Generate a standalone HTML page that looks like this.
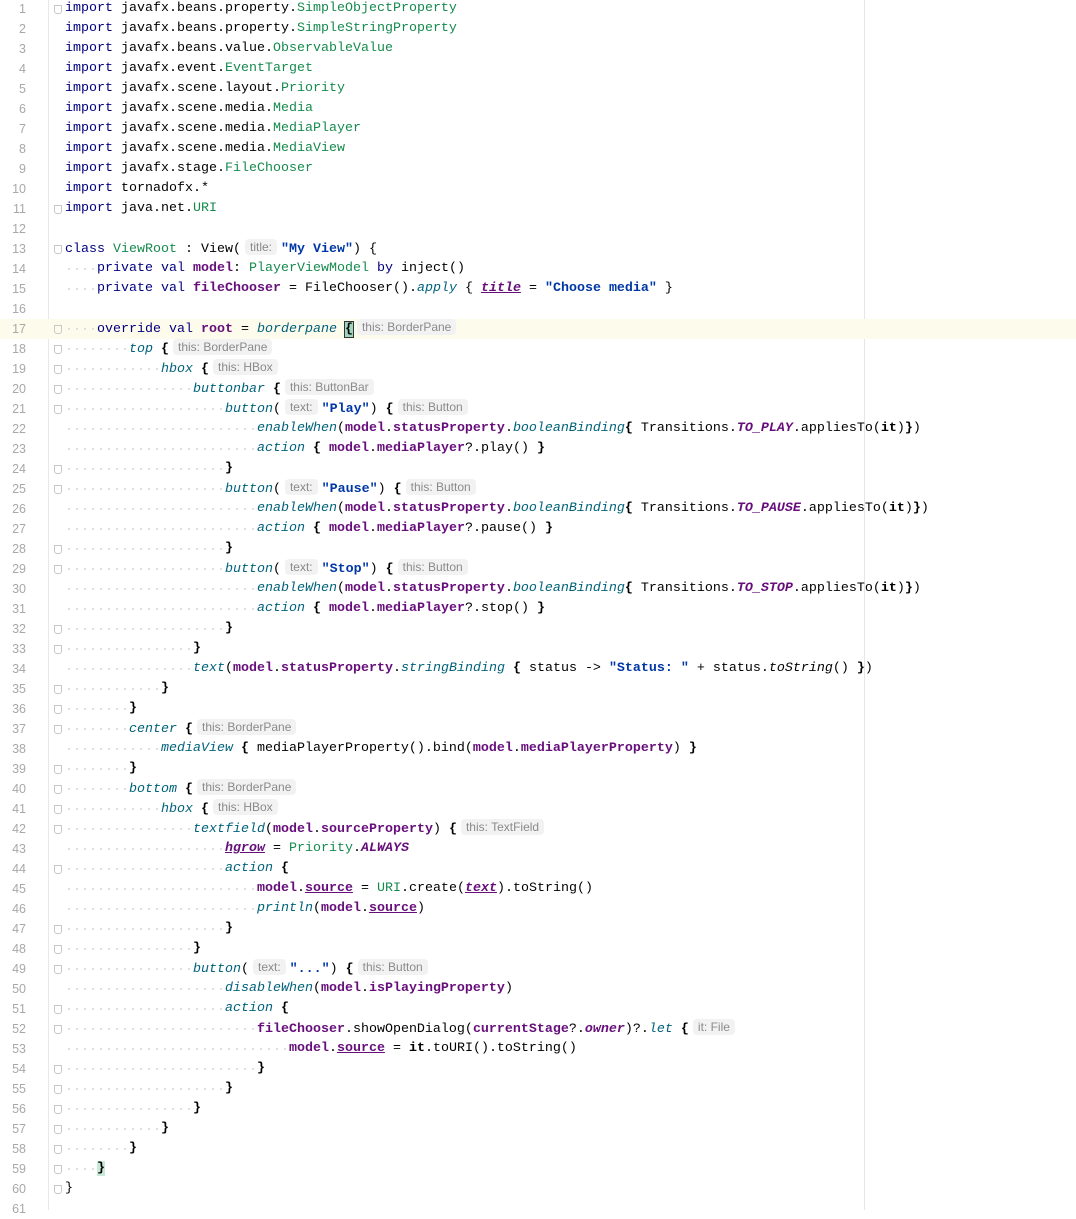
<!DOCTYPE html>
<html><head><meta charset="utf-8"><style>
body{margin:0;background:#fff;width:1076px;height:1210px;overflow:hidden;position:relative}
.g{position:absolute;left:0;top:0;width:48px;height:1210px;border-right:1px solid #e8e8e8;background:#fff}
.rm{position:absolute;left:864px;top:0;width:1px;height:1210px;background:#e6e6e6}
.code{position:absolute;left:0;top:-1px;width:1076px}
.l{height:20px;line-height:20px;position:relative;white-space:pre;font-family:"Liberation Mono",monospace;font-size:13.33px;color:#000}
.l .n{position:absolute;left:0;width:26px;text-align:right;color:#a8a8a8;font-family:"Liberation Sans",sans-serif;font-size:12.5px}
.l .c{position:absolute;left:65px}
.hl{background:#fdfbec}
.k{color:#000080}
.t{color:#168a4e}
.p{color:#660e7a;font-weight:bold}
.s{color:#0037a6;font-weight:bold}
.f{color:#00627a;font-style:italic}
.i{font-style:italic}
.pi{color:#660e7a;font-weight:bold;font-style:italic}
.u{text-decoration:underline}
.b{font-weight:bold}
.h{display:inline-block;background:#f2f2f2;color:#8a8a8a;font-family:"Liberation Sans",sans-serif;font-size:12px;line-height:16px;padding:0 5px;border-radius:4px;margin:0 4px;vertical-align:1px}
.w{display:inline-block;height:20px;vertical-align:top;background:radial-gradient(circle at 4px 10px,#d0d0d0 0.7px,transparent 1.1px) 0 0/8px 20px repeat-x}
.fm{position:absolute;left:54px;top:6px;width:6px;height:7px;border:1px solid #c8c8c8;border-radius:0 0 3px 3px}
.cur{background:#9fd4c0;outline:1px solid #333}
</style></head><body>
<div class="g"></div><div class="rm"></div>
<div class="code">
<div class="l"><span class="n">1</span><span class="fm"></span><span class="c"><span class="k">import</span> javafx.beans.property.<span class="t">SimpleObjectProperty</span></span></div>
<div class="l"><span class="n">2</span><span class="c"><span class="k">import</span> javafx.beans.property.<span class="t">SimpleStringProperty</span></span></div>
<div class="l"><span class="n">3</span><span class="c"><span class="k">import</span> javafx.beans.value.<span class="t">ObservableValue</span></span></div>
<div class="l"><span class="n">4</span><span class="c"><span class="k">import</span> javafx.event.<span class="t">EventTarget</span></span></div>
<div class="l"><span class="n">5</span><span class="c"><span class="k">import</span> javafx.scene.layout.<span class="t">Priority</span></span></div>
<div class="l"><span class="n">6</span><span class="c"><span class="k">import</span> javafx.scene.media.<span class="t">Media</span></span></div>
<div class="l"><span class="n">7</span><span class="c"><span class="k">import</span> javafx.scene.media.<span class="t">MediaPlayer</span></span></div>
<div class="l"><span class="n">8</span><span class="c"><span class="k">import</span> javafx.scene.media.<span class="t">MediaView</span></span></div>
<div class="l"><span class="n">9</span><span class="c"><span class="k">import</span> javafx.stage.<span class="t">FileChooser</span></span></div>
<div class="l"><span class="n">10</span><span class="c"><span class="k">import</span> tornadofx.*</span></div>
<div class="l"><span class="n">11</span><span class="fm"></span><span class="c"><span class="k">import</span> java.net.<span class="t">URI</span></span></div>
<div class="l"><span class="n">12</span></div>
<div class="l"><span class="n">13</span><span class="fm"></span><span class="c"><span class="k">class</span> <span class="t">ViewRoot</span> : View(<span class="h">title:</span><span class="s">"My View"</span>) {</span></div>
<div class="l"><span class="n">14</span><span class="c"><span class="w">    </span><span class="k">private val</span> <span class="p">model</span>: <span class="t">PlayerViewModel</span> <span class="k">by</span> inject()</span></div>
<div class="l"><span class="n">15</span><span class="c"><span class="w">    </span><span class="k">private val</span> <span class="p">fileChooser</span> = FileChooser().<span class="f">apply</span> { <span class="pi u">title</span> = <span class="s">"Choose media"</span> }</span></div>
<div class="l"><span class="n">16</span></div>
<div class="l hl"><span class="n">17</span><span class="fm"></span><span class="c"><span class="w">    </span><span class="k">override val</span> <span class="p">root</span> = <span class="f">borderpane</span> <span class="b cur">{</span><span class="h">this: BorderPane</span></span></div>
<div class="l"><span class="n">18</span><span class="fm"></span><span class="c"><span class="w">        </span><span class="f">top</span> <span class="b">{</span><span class="h">this: BorderPane</span></span></div>
<div class="l"><span class="n">19</span><span class="fm"></span><span class="c"><span class="w">            </span><span class="f">hbox</span> <span class="b">{</span><span class="h">this: HBox</span></span></div>
<div class="l"><span class="n">20</span><span class="fm"></span><span class="c"><span class="w">                </span><span class="f">buttonbar</span> <span class="b">{</span><span class="h">this: ButtonBar</span></span></div>
<div class="l"><span class="n">21</span><span class="fm"></span><span class="c"><span class="w">                    </span><span class="f">button</span>(<span class="h">text:</span><span class="s">"Play"</span>) <span class="b">{</span><span class="h">this: Button</span></span></div>
<div class="l"><span class="n">22</span><span class="c"><span class="w">                        </span><span class="f">enableWhen</span>(<span class="p">model</span>.<span class="p">statusProperty</span>.<span class="f">booleanBinding</span><span class="b">{</span> Transitions.<span class="pi">TO_PLAY</span>.appliesTo(<span class="b">it</span>)<span class="b">}</span>)</span></div>
<div class="l"><span class="n">23</span><span class="c"><span class="w">                        </span><span class="f">action</span> <span class="b">{</span> <span class="p">model</span>.<span class="p">mediaPlayer</span>?.play() <span class="b">}</span></span></div>
<div class="l"><span class="n">24</span><span class="fm"></span><span class="c"><span class="w">                    </span><span class="b">}</span></span></div>
<div class="l"><span class="n">25</span><span class="fm"></span><span class="c"><span class="w">                    </span><span class="f">button</span>(<span class="h">text:</span><span class="s">"Pause"</span>) <span class="b">{</span><span class="h">this: Button</span></span></div>
<div class="l"><span class="n">26</span><span class="c"><span class="w">                        </span><span class="f">enableWhen</span>(<span class="p">model</span>.<span class="p">statusProperty</span>.<span class="f">booleanBinding</span><span class="b">{</span> Transitions.<span class="pi">TO_PAUSE</span>.appliesTo(<span class="b">it</span>)<span class="b">}</span>)</span></div>
<div class="l"><span class="n">27</span><span class="c"><span class="w">                        </span><span class="f">action</span> <span class="b">{</span> <span class="p">model</span>.<span class="p">mediaPlayer</span>?.pause() <span class="b">}</span></span></div>
<div class="l"><span class="n">28</span><span class="fm"></span><span class="c"><span class="w">                    </span><span class="b">}</span></span></div>
<div class="l"><span class="n">29</span><span class="fm"></span><span class="c"><span class="w">                    </span><span class="f">button</span>(<span class="h">text:</span><span class="s">"Stop"</span>) <span class="b">{</span><span class="h">this: Button</span></span></div>
<div class="l"><span class="n">30</span><span class="c"><span class="w">                        </span><span class="f">enableWhen</span>(<span class="p">model</span>.<span class="p">statusProperty</span>.<span class="f">booleanBinding</span><span class="b">{</span> Transitions.<span class="pi">TO_STOP</span>.appliesTo(<span class="b">it</span>)<span class="b">}</span>)</span></div>
<div class="l"><span class="n">31</span><span class="c"><span class="w">                        </span><span class="f">action</span> <span class="b">{</span> <span class="p">model</span>.<span class="p">mediaPlayer</span>?.stop() <span class="b">}</span></span></div>
<div class="l"><span class="n">32</span><span class="fm"></span><span class="c"><span class="w">                    </span><span class="b">}</span></span></div>
<div class="l"><span class="n">33</span><span class="fm"></span><span class="c"><span class="w">                </span><span class="b">}</span></span></div>
<div class="l"><span class="n">34</span><span class="c"><span class="w">                </span><span class="f">text</span>(<span class="p">model</span>.<span class="p">statusProperty</span>.<span class="f">stringBinding</span> <span class="b">{</span> status -&gt; <span class="s">"Status: "</span> + status.<span class="i">toString</span>() <span class="b">}</span>)</span></div>
<div class="l"><span class="n">35</span><span class="fm"></span><span class="c"><span class="w">            </span><span class="b">}</span></span></div>
<div class="l"><span class="n">36</span><span class="fm"></span><span class="c"><span class="w">        </span><span class="b">}</span></span></div>
<div class="l"><span class="n">37</span><span class="fm"></span><span class="c"><span class="w">        </span><span class="f">center</span> <span class="b">{</span><span class="h">this: BorderPane</span></span></div>
<div class="l"><span class="n">38</span><span class="c"><span class="w">            </span><span class="f">mediaView</span> <span class="b">{</span> mediaPlayerProperty().bind(<span class="p">model</span>.<span class="p">mediaPlayerProperty</span>) <span class="b">}</span></span></div>
<div class="l"><span class="n">39</span><span class="fm"></span><span class="c"><span class="w">        </span><span class="b">}</span></span></div>
<div class="l"><span class="n">40</span><span class="fm"></span><span class="c"><span class="w">        </span><span class="f">bottom</span> <span class="b">{</span><span class="h">this: BorderPane</span></span></div>
<div class="l"><span class="n">41</span><span class="fm"></span><span class="c"><span class="w">            </span><span class="f">hbox</span> <span class="b">{</span><span class="h">this: HBox</span></span></div>
<div class="l"><span class="n">42</span><span class="fm"></span><span class="c"><span class="w">                </span><span class="f">textfield</span>(<span class="p">model</span>.<span class="p">sourceProperty</span>) <span class="b">{</span><span class="h">this: TextField</span></span></div>
<div class="l"><span class="n">43</span><span class="c"><span class="w">                    </span><span class="pi u">hgrow</span> = <span class="t">Priority</span>.<span class="pi">ALWAYS</span></span></div>
<div class="l"><span class="n">44</span><span class="fm"></span><span class="c"><span class="w">                    </span><span class="f">action</span> <span class="b">{</span></span></div>
<div class="l"><span class="n">45</span><span class="c"><span class="w">                        </span><span class="p">model</span>.<span class="p u">source</span> = <span class="t">URI</span>.create(<span class="pi u">text</span>).toString()</span></div>
<div class="l"><span class="n">46</span><span class="c"><span class="w">                        </span><span class="f">println</span>(<span class="p">model</span>.<span class="p u">source</span>)</span></div>
<div class="l"><span class="n">47</span><span class="fm"></span><span class="c"><span class="w">                    </span><span class="b">}</span></span></div>
<div class="l"><span class="n">48</span><span class="fm"></span><span class="c"><span class="w">                </span><span class="b">}</span></span></div>
<div class="l"><span class="n">49</span><span class="fm"></span><span class="c"><span class="w">                </span><span class="f">button</span>(<span class="h">text:</span><span class="s">"..."</span>) <span class="b">{</span><span class="h">this: Button</span></span></div>
<div class="l"><span class="n">50</span><span class="c"><span class="w">                    </span><span class="f">disableWhen</span>(<span class="p">model</span>.<span class="p">isPlayingProperty</span>)</span></div>
<div class="l"><span class="n">51</span><span class="fm"></span><span class="c"><span class="w">                    </span><span class="f">action</span> <span class="b">{</span></span></div>
<div class="l"><span class="n">52</span><span class="fm"></span><span class="c"><span class="w">                        </span><span class="p">fileChooser</span>.showOpenDialog(<span class="p">currentStage</span>?.<span class="pi">owner</span>)?.<span class="f">let</span> <span class="b">{</span><span class="h">it: File</span></span></div>
<div class="l"><span class="n">53</span><span class="c"><span class="w">                            </span><span class="p">model</span>.<span class="p u">source</span> = <span class="b">it</span>.toURI().toString()</span></div>
<div class="l"><span class="n">54</span><span class="fm"></span><span class="c"><span class="w">                        </span><span class="b">}</span></span></div>
<div class="l"><span class="n">55</span><span class="fm"></span><span class="c"><span class="w">                    </span><span class="b">}</span></span></div>
<div class="l"><span class="n">56</span><span class="fm"></span><span class="c"><span class="w">                </span><span class="b">}</span></span></div>
<div class="l"><span class="n">57</span><span class="fm"></span><span class="c"><span class="w">            </span><span class="b">}</span></span></div>
<div class="l"><span class="n">58</span><span class="fm"></span><span class="c"><span class="w">        </span><span class="b">}</span></span></div>
<div class="l"><span class="n">59</span><span class="fm"></span><span class="c"><span class="w">    </span><span class="b" style="background:#c8e8d8">}</span></span></div>
<div class="l"><span class="n">60</span><span class="fm"></span><span class="c">}</span></div>
<div class="l"><span class="n">61</span></div>
</div>
</body></html>
